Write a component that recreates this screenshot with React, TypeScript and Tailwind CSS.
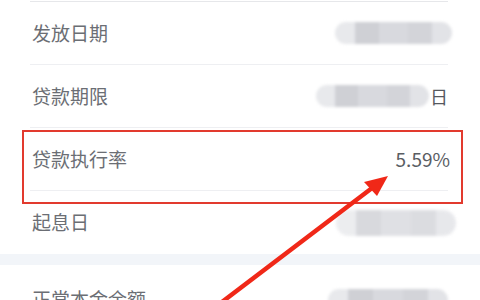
import React from 'react';

const FONT = { fontFamily: '"Noto Sans CJK SC", "Noto Sans", sans-serif' };

function Blur({ w, className = '' }: { w: string; className?: string }) {
  return (
    <div className={`h-[22px] ${w} rounded-full blur-[1.5px] flex overflow-hidden ${className}`}>
      <div className="flex-1 bg-[#e8e9ec]" />
      <div className="flex-[1.2] bg-[#cfd0d5]" />
      <div className="flex-[1.5] bg-[#d8d9de]" />
      <div className="flex-[1.2] bg-[#d3d4d9]" />
      <div className="flex-1 bg-[#e2e3e7]" />
    </div>
  );
}

function Row({ label, right, last }: { label: string; right: React.ReactNode; last?: boolean }) {
  return (
    <div className="pl-[30px] pr-[32px]">
      <div className={`h-[63px] flex items-center justify-between pl-[2px] ${last ? '' : 'border-b border-[#eeeff2]'}`}>
        <span className="text-[19px] text-[#6b6e74]">{label}</span>
        {right}
      </div>
    </div>
  );
}

export default function App() {
  return (
    <div className="relative w-[480px] h-[300px] bg-white overflow-hidden" style={FONT}>
      <div className="pl-[30px] pr-[32px]">
        <div className="h-[2px] border-b border-[#e6e7ea]" />
      </div>
      <Row label="发放日期" right={<Blur w="w-[117px]" className="mr-[-4px]" />} />
      <Row
        label="贷款期限"
        right={
          <div className="flex items-center">
            <Blur w="w-[113px]" />
            <span className="text-[18px] text-[#55585e] ml-[1px]">日</span>
          </div>
        }
      />
      <Row label="贷款执行率" right={<span className="text-[19px] text-[#5a5d63] mr-[-2px]">5.59%</span>} />
      <Row label="起息日" last right={<Blur w="w-[120px]" className="h-[26px] mr-[-8px] opacity-80" />} />
      <div className="h-[11px] bg-[#f2f5f9]" />
      <div className="pl-[32px] pr-[32px] pt-[20px] flex justify-between">
        <span className="text-[19px] text-[#6b6e74]">正常本金余额</span>
        <Blur w="w-[120px]" className="mt-[4px]" />
      </div>

      <div className="absolute left-[22px] top-[130px] w-[441px] h-[74px] border-2 border-[#e23a2e]" />

      <svg className="absolute inset-0" width="480" height="300" viewBox="0 0 480 300">
        <line x1="222" y1="302" x2="376" y2="185" stroke="#f02818" strokeWidth="4.5" strokeLinecap="round" />
        <polygon points="388,176 364,182 377,196" fill="#f02818" />
      </svg>
    </div>
  );
}
